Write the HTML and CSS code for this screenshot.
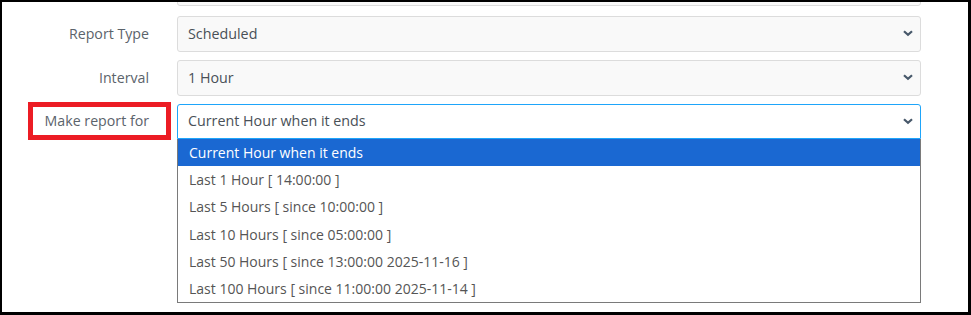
FILE: index.html
```html
<!DOCTYPE html>
<html lang="en">
  <head>
    <meta charset="utf-8">
    <title>Report settings</title>
    <link rel="stylesheet" href="styles.css">
  </head>
  <body>
    <div class="frame">
      <div class="form">
        <div class="row row-cut">
          <label class="label"></label>
          <div class="select"><span class="value"></span></div>
        </div>
        <div class="row">
          <label class="label">Report Type</label>
          <div class="select"><span class="value">Scheduled</span>
            <svg class="chevron" viewBox="0 0 10 7"><path d="M1 1.2l4 3.6 4-3.6"/></svg>
          </div>
        </div>
        <div class="row">
          <label class="label">Interval</label>
          <div class="select"><span class="value">1 Hour</span>
            <svg class="chevron" viewBox="0 0 10 7"><path d="M1 1.2l4 3.6 4-3.6"/></svg>
          </div>
        </div>
        <div class="row">
          <label class="label">Make report for</label>
          <div class="select open"><span class="value">Current Hour when it ends</span>
            <svg class="chevron" viewBox="0 0 10 7"><path d="M1 1.2l4 3.6 4-3.6"/></svg>
            <ul class="options">
              <li class="selected">Current Hour when it ends</li>
              <li>Last 1 Hour [ 14:00:00 ]</li>
              <li>Last 5 Hours [ since 10:00:00 ]</li>
              <li>Last 10 Hours [ since 05:00:00 ]</li>
              <li>Last 50 Hours [ since 13:00:00 2025-11-16 ]</li>
              <li>Last 100 Hours [ since 11:00:00 2025-11-14 ]</li>
            </ul>
          </div>
        </div>
      </div>
      <div class="mark"></div>
    </div>
  </body>
</html>
```

FILE: styles.css
```css
html, body {
  margin: 0;
  background: #fff;
}
body {
  font-family: "Open Sans", "Noto Sans", sans-serif;
  font-size: 14px;
}
.frame {
  position: relative;
  width: 971px;
  height: 315px;
  box-sizing: border-box;
  border: solid #000;
  border-width: 2px 3px 3px 2px;
  overflow: hidden;
}
.form {
  display: flex;
  flex-direction: column;
  gap: 8px;
}
.row {
  display: grid;
  grid-template-columns: 148px 744px;
  column-gap: 27px;
  align-items: center;
}
.row-cut {
  margin-top: -32px;
  margin-bottom: 2px;
}
.label {
  text-align: right;
  color: #5b636b;
  font-size: 14.2px;
  padding-right: 1px;
  padding-bottom: 2px;
}
.select {
  position: relative;
  height: 36px;
  box-sizing: border-box;
  border: 1px solid #dcdcdc;
  border-radius: 3px;
  background: #f9f9f9;
  display: flex;
  align-items: center;
  padding: 0 10px 2px;
  color: #495057;
  font-size: 14.3px;
}
.select.open {
  background: #fff;
  border-color: #1ea5fa;
  border-radius: 3px 3px 0 0;
  height: 35px;
}
.chevron {
  position: absolute;
  right: 7px;
  top: 50%;
  width: 10px;
  height: 7px;
  margin-top: -4px;
  fill: none;
  stroke: #47586a;
  stroke-width: 2.2;
}
.options {
  position: absolute;
  left: -1px;
  right: -1px;
  top: 34px;
  margin: 0;
  padding: 0;
  list-style: none;
  background: #fff;
  border: 1px solid #7a7a7a;
  border-top: 0;
  z-index: 2;
  font-size: 14px;
}
.options li {
  height: 27.2px;
  line-height: 27px;
  padding-left: 11px;
  color: #555;
  white-space: nowrap;
}
.options li.selected {
  background: #1a68d2;
  color: #fff;
}
.mark {
  position: absolute;
  left: 26px;
  top: 100px;
  width: 133px;
  height: 28px;
  border: 5px solid #ec1c24;
}
```
